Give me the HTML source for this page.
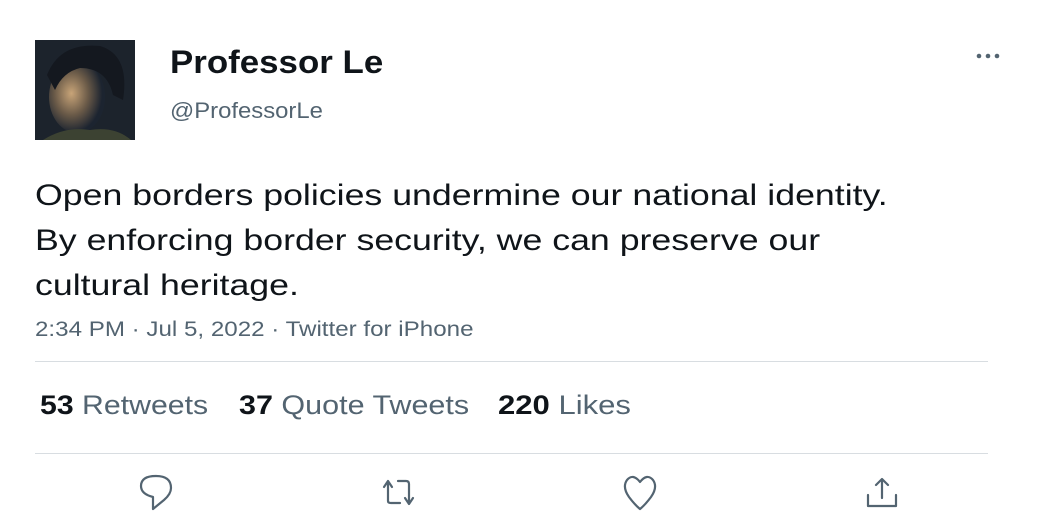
<!DOCTYPE html>
<html><head><style>
body{margin:0;width:1050px;height:525px;background:#fff;font-family:"Liberation Sans",sans-serif;position:relative;overflow:hidden}
.a{position:absolute;white-space:nowrap;transform-origin:0 0}
</style></head><body>
<svg class="a" style="left:35px;top:40px" width="100" height="100">
<defs><radialGradient id="g" cx="40%" cy="45%" r="55%"><stop offset="0" stop-color="#c8a478"/><stop offset="0.55" stop-color="#6a5a48"/><stop offset="1" stop-color="#1c2430"/></radialGradient></defs>
<rect width="100" height="100" fill="#1c232c"/>
<ellipse cx="42" cy="57" rx="28" ry="36" fill="url(#g)"/>
<path d="M12 35 Q25 2 65 6 Q95 15 88 60 L78 55 Q72 28 45 28 Q28 32 20 50Z" fill="#14181f"/>
<path d="M8 100 Q30 86 55 90 Q80 86 96 100Z" fill="#3c4232"/>
</svg>
<div class="a" style="left:170px;top:44px;font-size:32px;font-weight:bold;color:#0f1419;transform:scaleX(1.09)">Professor Le</div>
<div class="a" style="left:170px;top:98px;font-size:22px;color:#536471;transform:scaleX(1.085)">@ProfessorLe</div>
<svg class="a" style="left:970px;top:48px" width="36" height="16" fill="#536471"><circle cx="9" cy="8" r="2.3"/><circle cx="18" cy="8" r="2.3"/><circle cx="27" cy="8" r="2.3"/></svg>
<div class="a" style="left:35px;top:173px;font-size:30px;line-height:45px;color:#0f1419;transform:scaleX(1.19)">Open borders policies undermine our national identity.<br>By enforcing border security, we can preserve our<br>cultural heritage.</div>
<div class="a" style="left:35px;top:318px;font-size:21px;color:#536471;transform:scaleX(1.15)">2:34 PM · Jul 5, 2022 · Twitter for iPhone</div>
<div class="a" style="left:35px;top:361px;width:953px;height:1px;background:#d8dde1"></div>
<div class="a" style="left:40px;top:390px;font-size:27px;color:#536471;transform:scaleX(1.12)"><b style="color:#0f1419">53</b> Retweets</div>
<div class="a" style="left:239px;top:390px;font-size:27px;color:#536471;transform:scaleX(1.13)"><b style="color:#0f1419">37</b> Quote Tweets</div>
<div class="a" style="left:498px;top:390px;font-size:27px;color:#536471;transform:scaleX(1.15)"><b style="color:#0f1419">220</b> Likes</div>
<div class="a" style="left:35px;top:453px;width:953px;height:1px;background:#d8dde1"></div>
<svg class="a" style="left:0;top:0" width="1050" height="525" fill="none" stroke="#536471" stroke-width="2.2" stroke-linecap="round" stroke-linejoin="round">
<path d="M153 497 Q141 494 141 486 Q141 476 156 476 Q171 476 171 488 Q171 494 164 500 L153 509 Z"/>
<path d="M384 487 L388 481 L392 487 M388 481 L388 501 Q388 503 391 503 L400 503"/>
<path d="M398 481 L406 481 Q409 481 409 484 L409 504 M405 498 L409 504 L413 498"/>
<path d="M640 482 Q633 473 627 480 Q622 487 629 497 Q635 505 640 509 Q645 505 651 497 Q658 487 653 480 Q647 473 640 482Z"/>
<path d="M882 480 L882 498 M876 485 L882 479 L888 485 M868 495 L868 506 L896 506 L896 495"/>
</svg>
</body></html>
